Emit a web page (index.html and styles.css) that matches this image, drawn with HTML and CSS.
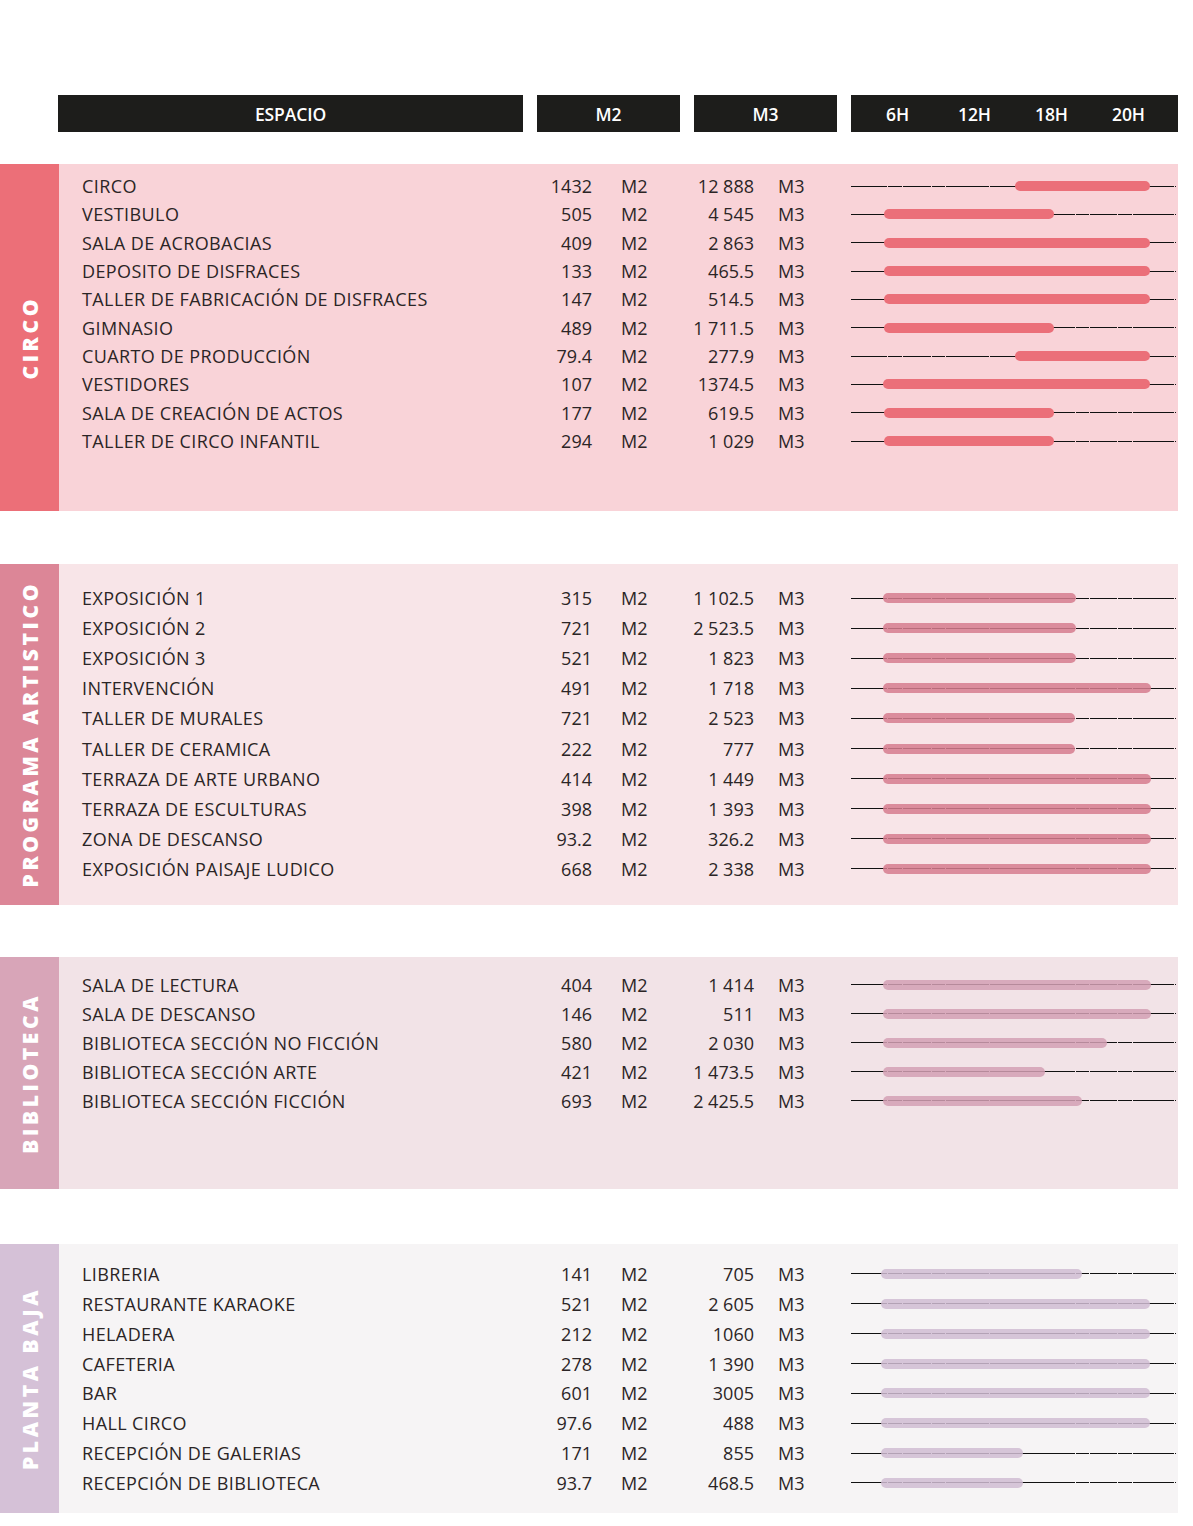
FILE: index.html
```html
<!DOCTYPE html>
<html lang="es">
<head>
<meta charset="utf-8">
<title>Programa</title>
<link rel="stylesheet" href="styles.css">
</head>
<body>
<div class="page">
  <div class="head">
    <div class="hcell h-esp">ESPACIO</div>
    <div class="hcell h-m2">M2</div>
    <div class="hcell h-m3">M3</div>
    <div class="hcell h-hours"><span>6H</span><span>12H</span><span>18H</span><span>20H</span></div>
  </div>

  <section class="sec s1">
    <div class="band"><span>CIRCO</span></div>
    <div class="rows">
      <div class="row"><span class="nm">CIRCO</span><span class="n2">1432</span><span class="u2">M2</span><span class="n3">12 888</span><span class="u3">M3</span><span class="track"><i class="bar" style="left:164px;width:135px"></i></span></div>
      <div class="row"><span class="nm">VESTIBULO</span><span class="n2">505</span><span class="u2">M2</span><span class="n3">4 545</span><span class="u3">M3</span><span class="track"><i class="bar" style="left:33px;width:170px"></i></span></div>
      <div class="row"><span class="nm">SALA DE ACROBACIAS</span><span class="n2">409</span><span class="u2">M2</span><span class="n3">2 863</span><span class="u3">M3</span><span class="track"><i class="bar" style="left:33px;width:266px"></i></span></div>
      <div class="row"><span class="nm">DEPOSITO DE DISFRACES</span><span class="n2">133</span><span class="u2">M2</span><span class="n3">465.5</span><span class="u3">M3</span><span class="track"><i class="bar" style="left:33px;width:266px"></i></span></div>
      <div class="row"><span class="nm">TALLER DE FABRICACIÓN DE DISFRACES</span><span class="n2">147</span><span class="u2">M2</span><span class="n3">514.5</span><span class="u3">M3</span><span class="track"><i class="bar" style="left:33px;width:266px"></i></span></div>
      <div class="row"><span class="nm">GIMNASIO</span><span class="n2">489</span><span class="u2">M2</span><span class="n3">1 711.5</span><span class="u3">M3</span><span class="track"><i class="bar" style="left:33px;width:170px"></i></span></div>
      <div class="row"><span class="nm">CUARTO DE PRODUCCIÓN</span><span class="n2">79.4</span><span class="u2">M2</span><span class="n3">277.9</span><span class="u3">M3</span><span class="track"><i class="bar" style="left:164px;width:135px"></i></span></div>
      <div class="row"><span class="nm">VESTIDORES</span><span class="n2">107</span><span class="u2">M2</span><span class="n3">1374.5</span><span class="u3">M3</span><span class="track"><i class="bar" style="left:32px;width:267px"></i></span></div>
      <div class="row"><span class="nm">SALA DE CREACIÓN DE ACTOS</span><span class="n2">177</span><span class="u2">M2</span><span class="n3">619.5</span><span class="u3">M3</span><span class="track"><i class="bar" style="left:33px;width:170px"></i></span></div>
      <div class="row"><span class="nm">TALLER DE CIRCO INFANTIL</span><span class="n2">294</span><span class="u2">M2</span><span class="n3">1 029</span><span class="u3">M3</span><span class="track"><i class="bar" style="left:33px;width:170px"></i></span></div>
    </div>
  </section>

  <section class="sec s2">
    <div class="band"><span>PROGRAMA ARTISTICO</span></div>
    <div class="rows">
      <div class="row"><span class="nm">EXPOSICIÓN 1</span><span class="n2">315</span><span class="u2">M2</span><span class="n3">1 102.5</span><span class="u3">M3</span><span class="track"><i class="bar" style="left:32px;width:193px"></i></span></div>
      <div class="row"><span class="nm">EXPOSICIÓN 2</span><span class="n2">721</span><span class="u2">M2</span><span class="n3">2 523.5</span><span class="u3">M3</span><span class="track"><i class="bar" style="left:32px;width:193px"></i></span></div>
      <div class="row"><span class="nm">EXPOSICIÓN 3</span><span class="n2">521</span><span class="u2">M2</span><span class="n3">1 823</span><span class="u3">M3</span><span class="track"><i class="bar" style="left:32px;width:193px"></i></span></div>
      <div class="row"><span class="nm">INTERVENCIÓN</span><span class="n2">491</span><span class="u2">M2</span><span class="n3">1 718</span><span class="u3">M3</span><span class="track"><i class="bar" style="left:32px;width:268px"></i></span></div>
      <div class="row"><span class="nm">TALLER DE MURALES</span><span class="n2">721</span><span class="u2">M2</span><span class="n3">2 523</span><span class="u3">M3</span><span class="track"><i class="bar" style="left:32px;width:192px"></i></span></div>
      <div class="row"><span class="nm">TALLER DE CERAMICA</span><span class="n2">222</span><span class="u2">M2</span><span class="n3">777</span><span class="u3">M3</span><span class="track"><i class="bar" style="left:32px;width:192px"></i></span></div>
      <div class="row"><span class="nm">TERRAZA DE ARTE URBANO</span><span class="n2">414</span><span class="u2">M2</span><span class="n3">1 449</span><span class="u3">M3</span><span class="track"><i class="bar" style="left:32px;width:268px"></i></span></div>
      <div class="row"><span class="nm">TERRAZA DE ESCULTURAS</span><span class="n2">398</span><span class="u2">M2</span><span class="n3">1 393</span><span class="u3">M3</span><span class="track"><i class="bar" style="left:32px;width:268px"></i></span></div>
      <div class="row"><span class="nm">ZONA DE DESCANSO</span><span class="n2">93.2</span><span class="u2">M2</span><span class="n3">326.2</span><span class="u3">M3</span><span class="track"><i class="bar" style="left:32px;width:268px"></i></span></div>
      <div class="row"><span class="nm">EXPOSICIÓN PAISAJE LUDICO</span><span class="n2">668</span><span class="u2">M2</span><span class="n3">2 338</span><span class="u3">M3</span><span class="track"><i class="bar" style="left:32px;width:268px"></i></span></div>
    </div>
  </section>

  <section class="sec s3">
    <div class="band"><span>BIBLIOTECA</span></div>
    <div class="rows">
      <div class="row"><span class="nm">SALA DE LECTURA</span><span class="n2">404</span><span class="u2">M2</span><span class="n3">1 414</span><span class="u3">M3</span><span class="track"><i class="bar" style="left:32px;width:268px"></i></span></div>
      <div class="row"><span class="nm">SALA DE DESCANSO</span><span class="n2">146</span><span class="u2">M2</span><span class="n3">511</span><span class="u3">M3</span><span class="track"><i class="bar" style="left:32px;width:268px"></i></span></div>
      <div class="row"><span class="nm">BIBLIOTECA SECCIÓN NO FICCIÓN</span><span class="n2">580</span><span class="u2">M2</span><span class="n3">2 030</span><span class="u3">M3</span><span class="track"><i class="bar" style="left:32px;width:224px"></i></span></div>
      <div class="row"><span class="nm">BIBLIOTECA SECCIÓN ARTE</span><span class="n2">421</span><span class="u2">M2</span><span class="n3">1 473.5</span><span class="u3">M3</span><span class="track"><i class="bar" style="left:32px;width:162px"></i></span></div>
      <div class="row"><span class="nm">BIBLIOTECA SECCIÓN FICCIÓN</span><span class="n2">693</span><span class="u2">M2</span><span class="n3">2 425.5</span><span class="u3">M3</span><span class="track"><i class="bar" style="left:32px;width:199px"></i></span></div>
    </div>
  </section>

  <section class="sec s4">
    <div class="band"><span>PLANTA BAJA</span></div>
    <div class="rows">
      <div class="row"><span class="nm">LIBRERIA</span><span class="n2">141</span><span class="u2">M2</span><span class="n3">705</span><span class="u3">M3</span><span class="track"><i class="bar" style="left:30px;width:201px"></i></span></div>
      <div class="row"><span class="nm">RESTAURANTE KARAOKE</span><span class="n2">521</span><span class="u2">M2</span><span class="n3">2 605</span><span class="u3">M3</span><span class="track"><i class="bar" style="left:30px;width:269px"></i></span></div>
      <div class="row"><span class="nm">HELADERA</span><span class="n2">212</span><span class="u2">M2</span><span class="n3">1060</span><span class="u3">M3</span><span class="track"><i class="bar" style="left:30px;width:269px"></i></span></div>
      <div class="row"><span class="nm">CAFETERIA</span><span class="n2">278</span><span class="u2">M2</span><span class="n3">1 390</span><span class="u3">M3</span><span class="track"><i class="bar" style="left:30px;width:269px"></i></span></div>
      <div class="row"><span class="nm">BAR</span><span class="n2">601</span><span class="u2">M2</span><span class="n3">3005</span><span class="u3">M3</span><span class="track"><i class="bar" style="left:30px;width:269px"></i></span></div>
      <div class="row"><span class="nm">HALL CIRCO</span><span class="n2">97.6</span><span class="u2">M2</span><span class="n3">488</span><span class="u3">M3</span><span class="track"><i class="bar" style="left:30px;width:269px"></i></span></div>
      <div class="row"><span class="nm">RECEPCIÓN DE GALERIAS</span><span class="n2">171</span><span class="u2">M2</span><span class="n3">855</span><span class="u3">M3</span><span class="track"><i class="bar" style="left:30px;width:142px"></i></span></div>
      <div class="row"><span class="nm">RECEPCIÓN DE BIBLIOTECA</span><span class="n2">93.7</span><span class="u2">M2</span><span class="n3">468.5</span><span class="u3">M3</span><span class="track"><i class="bar" style="left:30px;width:142px"></i></span></div>
    </div>
  </section>
</div>
</body>
</html>
```

FILE: styles.css
```css
* { box-sizing: border-box; }
html, body { margin: 0; padding: 0; background: #ffffff; }
body {
  font-family: "Open Sans", "Noto Sans", sans-serif;
  color: #2b2526;
  width: 1193px;
}
.page { padding-top: 95px; padding-bottom: 13px; }

.head {
  display: grid;
  grid-template-columns: 465px 143px 143px 327px;
  column-gap: 14px;
  margin-left: 58px;
  height: 37px;
}
.hcell {
  background: #1d1d1b;
  color: #ffffff;
  font-size: 17.5px;
  font-weight: 600;
  display: flex;
  align-items: center;
  justify-content: center;
  letter-spacing: -0.1px;
}
.h-hours {
  display: grid;
  grid-template-columns: repeat(4, 77px);
  padding-left: 8px;
  justify-items: center;
  justify-content: start;
}

.sec {
  display: grid;
  grid-template-columns: 59px 1119px;
}
.band {
  display: flex;
  align-items: center;
  justify-content: center;
}
.band span {
  writing-mode: vertical-rl;
  transform: rotate(180deg);
  color: #ffffff;
  font-family: "Open Sans", sans-serif;
  font-weight: 800;
  font-size: 21px;
  letter-spacing: 3.6px;
  white-space: nowrap;
}
.rows { padding-left: 23px; }

.row {
  display: grid;
  grid-template-columns: 455px 55px 88px 74px 97px 327px;
  align-items: center;
  font-size: 18px;
  letter-spacing: 0.4px;
  white-space: nowrap;
}
.n2, .n3 { text-align: right; letter-spacing: 0; }
.u2, .u3 { letter-spacing: 0; }
.u2 { padding-left: 29px; }
.u3 { padding-left: 24px; }

.track {
  position: relative;
  height: 12px;
  align-self: center;
  background:
    linear-gradient(to right,
      #111 0 36px, transparent 36px 37px,
      #111 37px 51px, transparent 51px 52px,
      #111 52px 80px, transparent 80px 81px,
      #111 81px 94px, transparent 94px 95px,
      #111 95px 138px, transparent 138px 139px,
      #111 139px 224px, transparent 224px 225px,
      #111 225px 238px, transparent 238px 239px,
      #111 239px 266px, transparent 266px 267px,
      #111 267px 281px, transparent 281px 282px,
      #111 282px 323px, transparent 323px 324px,
      #111 324px 325px, transparent 325px 327px)
    0 5.5px / 100% 1.2px no-repeat;
}
.bar {
  position: absolute;
  top: 1px;
  height: 10px;
  border-radius: 5px;
}

.s1 { height: 347px; margin-top: 32px; }
.s1 .band { background: #ec6f78; }
.s1 .rows { background: #f9d3d8; padding-top: 8px; }
.s1 .row { height: 28.33px; }
.s1 .bar { background: #eb6f79; }

.s2 { height: 341px; margin-top: 53px; }
.s2 .band { background: #dc8697; }
.s2 .rows { background: #f8e5e8; padding-top: 19px; }
.s2 .row { height: 30.1px; }
.s2 .bar { background: rgba(214, 124, 142, 0.85); }

.s3 { height: 232px; margin-top: 52px; }
.s3 .band { background: #d8a5b8; }
.s3 .rows { background: #f2e3e7; padding-top: 13px; }
.s3 .row { height: 29px; }
.s3 .bar { background: rgba(211, 160, 180, 0.85); }

.s4 { height: 269px; margin-top: 55px; }
.s4 .band { background: #d5c1d7; }
.s4 .rows { background: #f6f4f5; padding-top: 15px; }
.s4 .row { height: 29.86px; }
.s4 .bar { background: rgba(208, 188, 210, 0.85); }
```
